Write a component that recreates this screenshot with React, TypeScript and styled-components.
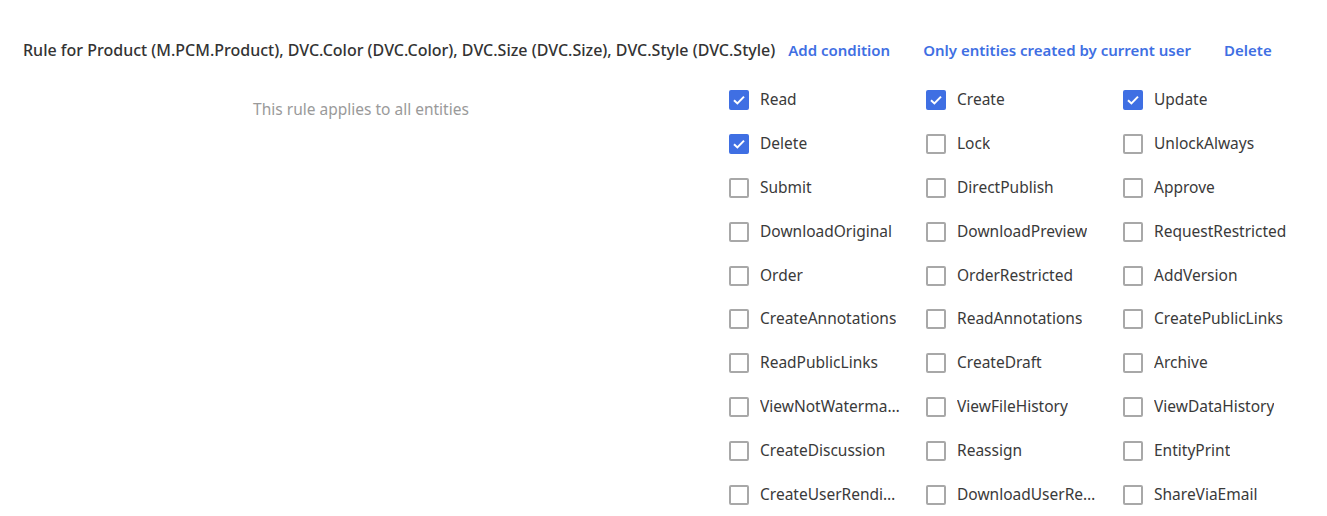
import React from 'react';
import styled, { createGlobalStyle } from 'styled-components';

const GlobalStyle = createGlobalStyle`
  body {
    margin: 0;
    background: #ffffff;
    font-family: "Noto Sans", "Open Sans", sans-serif;
    color: #333333;
  }
`;

const Page = styled.div`
  padding-top: 38px;
`;

const Header = styled.div`
  display: flex;
  align-items: center;
  padding-left: 23px;
  height: 24px;
`;

const Title = styled.span`
  font-size: 16px;
  font-weight: 500;
  color: #333333;
  margin-right: 13px;
  white-space: nowrap;
`;

const HeaderLink = styled.a`
  font-size: 15px;
  font-weight: 600;
  color: #3f6fe3;
  text-decoration: none;
  margin-right: 33px;
  white-space: nowrap;
  cursor: pointer;
`;

const Body = styled.div`
  display: flex;
  margin-top: 16px;
`;

const EmptyPane = styled.div`
  width: 722px;
  text-align: center;
  padding-top: 20px;
  font-size: 15.5px;
  color: #9a9a9a;
`;

const Grid = styled.div`
  display: grid;
  grid-template-columns: repeat(3, 197px);
  grid-auto-rows: 43.9px;
`;

const Item = styled.label`
  display: flex;
  align-items: center;
  gap: 11px;
  padding-left: 7px;
  cursor: pointer;
`;

const Box = styled.span<{ $checked: boolean }>`
  flex: none;
  width: 20px;
  height: 20px;
  box-sizing: border-box;
  border-radius: 2px;
  border: 2px solid ${p => (p.$checked ? '#3f6fe3' : '#a8a8a8')};
  background: ${p => (p.$checked ? '#3f6fe3' : '#ffffff')};
  display: flex;
  align-items: center;
  justify-content: center;
`;

const Label = styled.span`
  font-size: 15.5px;
  color: #3a3a3a;
  max-width: 140.5px;
  white-space: nowrap;
  overflow: hidden;
  text-overflow: ellipsis;
  margin-top: -2px;
`;

const permissions: [string, boolean][] = [
  ['Read', true], ['Create', true], ['Update', true],
  ['Delete', true], ['Lock', false], ['UnlockAlways', false],
  ['Submit', false], ['DirectPublish', false], ['Approve', false],
  ['DownloadOriginal', false], ['DownloadPreview', false], ['RequestRestricted', false],
  ['Order', false], ['OrderRestricted', false], ['AddVersion', false],
  ['CreateAnnotations', false], ['ReadAnnotations', false], ['CreatePublicLinks', false],
  ['ReadPublicLinks', false], ['CreateDraft', false], ['Archive', false],
  ['ViewNotWatermarked', false], ['ViewFileHistory', false], ['ViewDataHistory', false],
  ['CreateDiscussion', false], ['Reassign', false], ['EntityPrint', false],
  ['CreateUserRendition', false], ['DownloadUserRendition', false], ['ShareViaEmail', false],
];

const Check = () => (
  <svg width="14" height="14" viewBox="0 0 14 14">
    <path d="M2 7.2 L5.4 10.4 L12 3.6" fill="none" stroke="#fff" strokeWidth="2" />
  </svg>
);

const App = () => (
  <Page>
    <GlobalStyle />
    <Header>
      <Title>
        Rule for Product (M.PCM.Product), DVC.Color (DVC.Color), DVC.Size (DVC.Size), DVC.Style (DVC.Style)
      </Title>
      <HeaderLink>Add condition</HeaderLink>
      <HeaderLink>Only entities created by current user</HeaderLink>
      <HeaderLink>Delete</HeaderLink>
    </Header>
    <Body>
      <EmptyPane>This rule applies to all entities</EmptyPane>
      <Grid>
        {permissions.map(([name, checked]) => (
          <Item key={name}>
            <Box $checked={checked}>{checked && <Check />}</Box>
            <Label>{name}</Label>
          </Item>
        ))}
      </Grid>
    </Body>
  </Page>
);

export default App;
